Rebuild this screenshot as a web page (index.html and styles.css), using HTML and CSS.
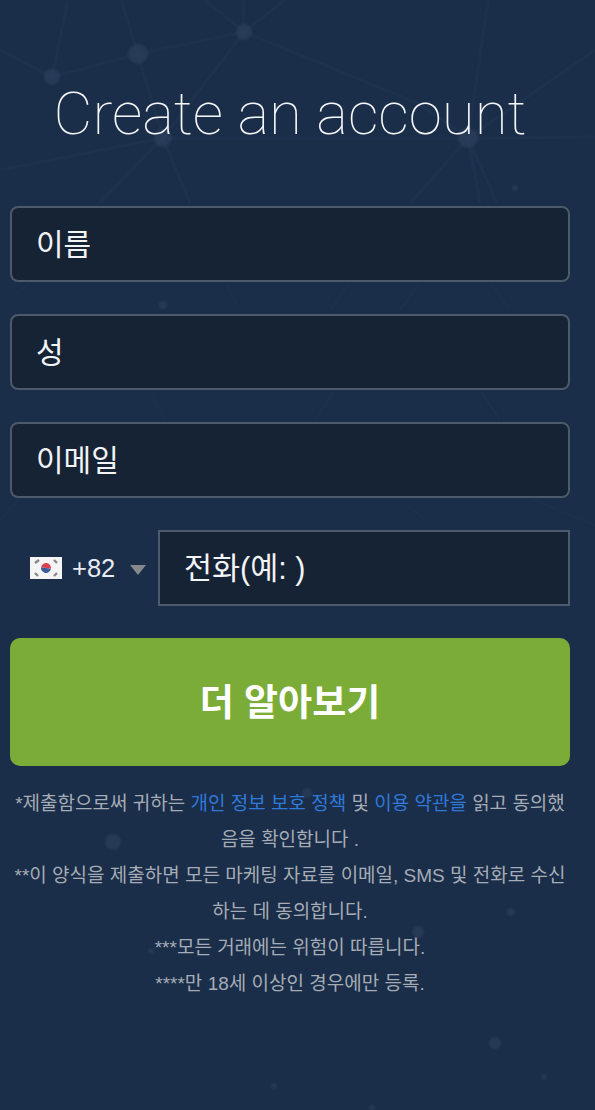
FILE: index.html
```html
<!DOCTYPE html>
<html lang="ko">
<head>
<meta charset="utf-8">
<title>Create an account</title>
<link rel="stylesheet" href="styles.css">
</head>
<body>
<svg class="network" viewBox="0 0 595 1110" aria-hidden="true">
  <g class="links">
    <path d="M0 50L52 77L138 54L244 32L417 103L468 138L595 50"/>
    <path d="M52 77L68 0M121 0L138 54L163 138M205 0L244 32M243 0L244 32M285 0L244 32M244 32L163 138"/>
    <path d="M0 170L163 138M99 203L163 138M190 203L163 138L468 138"/>
    <path d="M488 0L468 138M410 203L468 138M480 203L468 138M497 203L468 138M595 137L468 138"/>
    <path class="faint" d="M10 300L30 282M225 282L240 310M350 282L330 310M420 282L400 310M490 282L510 310M150 390L165 420M335 390L315 420M480 390L500 420"/>
    <path class="faint" d="M400 500L440 530M530 498L595 525M20 498L0 520"/>
  </g>
  <g class="nodes">
    <circle cx="52" cy="77" r="8"/>
    <circle cx="138" cy="54" r="10"/>
    <circle cx="244" cy="32" r="8"/>
    <circle cx="163" cy="138" r="9"/>
    <circle cx="468" cy="138" r="10"/>
    <circle cx="163" cy="305" r="4"/>
    <circle cx="515" cy="188" r="3"/>
    <circle cx="113" cy="842" r="8"/>
    <circle cx="307" cy="793" r="5"/>
    <circle cx="418" cy="932" r="6"/>
    <circle cx="511" cy="912" r="4"/>
    <circle cx="151" cy="951" r="3"/>
    <circle cx="495" cy="1043" r="6"/>
    <circle cx="544" cy="1077" r="3"/>
    <circle cx="274" cy="1086" r="3"/>
    <circle cx="372" cy="1108" r="3"/>
  </g>
</svg>
<main class="page">
  <h1 class="title">Create an account</h1>
  <form class="form">
    <div class="field">이름</div>
    <div class="field">성</div>
    <div class="field">이메일</div>
    <div class="phone">
      <div class="code">
        <svg class="flag" viewBox="0 0 32 22" aria-hidden="true">
          <rect width="32" height="22" fill="#f4f4f4"/>
          <path d="M16 6a5 5 0 0 1 0 10z" fill="#3b5c9c" transform="rotate(100 16 11)"/>
          <path d="M16 6a5 5 0 0 0 0 10z" fill="#d8404c" transform="rotate(100 16 11)"/>
          <g stroke="#888" stroke-width="2.4">
            <path d="M5 6l4-3M24 3l3 3M5 16l3 3M24 19l3-3"/>
          </g>
        </svg>
        <span class="dial">+82</span>
        <span class="caret"></span>
      </div>
      <div class="field field-phone">전화(예: )</div>
    </div>
    <button class="submit" type="button">더 알아보기</button>
  </form>
  <div class="legal">
    <p>*제출함으로써 귀하는 <a href="#">개인 정보 보호 정책</a> 및 <a href="#">이용 약관을</a> 읽고 동의했음을 확인합니다 .</p>
    <p>**이 양식을 제출하면 모든 마케팅 자료를 이메일, SMS 및 전화로 수신하는 데 동의합니다.</p>
    <p>***모든 거래에는 위험이 따릅니다.</p>
    <p>****만 18세 이상인 경우에만 등록.</p>
  </div>
</main>
</body>
</html>
```
FILE: styles.css
```css
html, body {
  margin: 0;
  padding: 0;
}
body {
  position: relative;
  width: 595px;
  height: 1110px;
  overflow: hidden;
  background: #1a2d49;
  font-family: "Liberation Sans", "Noto Sans CJK KR", sans-serif;
  color: #fff;
}
.network {
  position: absolute;
  inset: 0;
  width: 595px;
  height: 1110px;
  filter: blur(1.2px);
}
.links path {
  fill: none;
  stroke: #2b405e;
  stroke-width: 1.5;
  opacity: 0.55;
}
.links .faint {
  opacity: 0.3;
}
.nodes circle {
  fill: #2f435f;
  opacity: 0.6;
}
.page {
  position: relative;
  padding: 0 25px 0 10px;
}
.title {
  margin: 0;
  padding-top: 78px;
  height: 128px;
  font-family: Roboto, sans-serif;
  font-weight: 100;
  font-size: 60px;
  line-height: 72px;
  text-align: center;
  color: #f4f6f8;
  white-space: nowrap;
}
.form {
  display: flex;
  flex-direction: column;
  gap: 32px;
}
.field {
  box-sizing: border-box;
  height: 76px;
  padding: 0 24px 4px;
  display: flex;
  align-items: center;
  background: #162335;
  border: 2px solid #4d5a6b;
  border-radius: 8px;
  font-size: 30px;
  color: #f2f4f6;
}
.phone {
  display: flex;
  align-items: center;
}
.code {
  width: 148px;
  flex: none;
  display: flex;
  align-items: center;
  padding-left: 20px;
  box-sizing: border-box;
}
.flag {
  width: 32px;
  height: 22px;
  flex: none;
}
.dial {
  margin-left: 10px;
  font-size: 25.5px;
  color: #e8ecf0;
}
.caret {
  margin-left: 15px;
  margin-top: 4px;
  border-left: 8px solid transparent;
  border-right: 8px solid transparent;
  border-top: 10px solid #85888c;
}
.field-phone {
  flex: 1;
  border-radius: 0;
  font-size: 30.5px;
}
.submit {
  height: 128px;
  margin: 0;
  padding: 0 0 4px;
  border: 0;
  border-radius: 10px;
  background: #7cac38;
  color: #fff;
  font-family: inherit;
  font-size: 37px;
  font-weight: 700;
}
.legal {
  margin: 20px -5px 0 -5px;
  padding: 0 8px;
  font-size: 19px;
  line-height: 36px;
  text-align: center;
  color: #a5acb5;
}
.legal p {
  margin: 0;
}
.legal a {
  color: #2f79d9;
  text-decoration: none;
}
```
